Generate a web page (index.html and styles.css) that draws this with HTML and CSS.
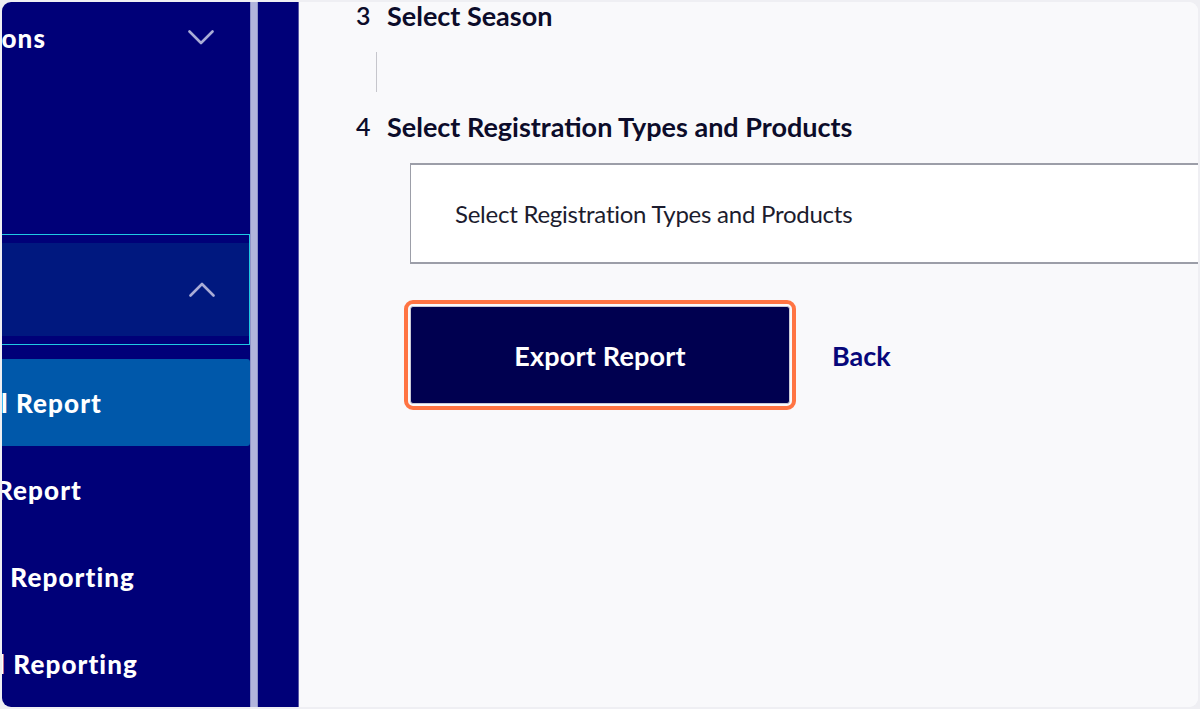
FILE: index.html
```html
<!DOCTYPE html>
<html lang="en">
<head>
<meta charset="utf-8">
<title>Export Report</title>
<link rel="stylesheet" href="styles.css">
</head>
<body>
<div class="frame">
  <aside class="sidebar">
    <div class="nav-row nav-top">
      <span class="label end-44">Registrations</span>
      <svg class="chev" width="26" height="15" viewBox="0 0 26 15"><polyline points="1.5,1.5 13,13 24.5,1.5" fill="none" stroke="#a9acd6" stroke-width="2.6" stroke-linecap="round" stroke-linejoin="round"/></svg>
    </div>
    <div class="nav-spacer"></div>
    <div class="nav-group">
      <div class="nav-group-inner">
        <span class="label end-0">Reports</span>
        <svg class="chev" width="26" height="15" viewBox="0 0 26 15"><polyline points="1.5,13.5 13,2 24.5,13.5" fill="none" stroke="#a9acd6" stroke-width="2.6" stroke-linecap="round" stroke-linejoin="round"/></svg>
      </div>
    </div>
    <div class="nav-item active"><span class="label end-100">Individual Report</span></div>
    <div class="nav-item"><span class="label end-80">Member Report</span></div>
    <div class="nav-item"><span class="label end-131">Regional Reporting</span></div>
    <div class="nav-item"><span class="label end-136">Financial Reporting</span></div>
  </aside>
  <div class="scrollbar"></div>
  <div class="gutter"></div>
  <main class="main">
    <div class="step step-3">
      <span class="step-num">3</span>
      <span class="step-title">Select Season</span>
    </div>
    <div class="step-line"></div>
    <div class="step step-4">
      <span class="step-num">4</span>
      <span class="step-title">Select Registration Types and Products</span>
    </div>
    <div class="select-box">Select Registration Types and Products</div>
    <div class="actions">
      <button class="btn-export">Export Report</button>
      <a class="btn-back">Back</a>
    </div>
  </main>
</div>
</body>
</html>
```
FILE: styles.css
```css
html, body {
  margin: 0;
  padding: 0;
}
body {
  background: #efeff3;
  width: 1200px;
  height: 709px;
  overflow: hidden;
  font-family: Lato, "Liberation Sans", sans-serif;
}
.frame {
  margin: 2px;
  width: 1196px;
  height: 705px;
  border-radius: 9px;
  overflow: hidden;
  display: flex;
  background: #f9f9fb;
}
.sidebar {
  width: 248px;
  flex-shrink: 0;
  background: #000078;
  overflow: hidden;
  display: flex;
  flex-direction: column;
}
.label {
  display: flex;
  justify-content: flex-end;
  white-space: nowrap;
  color: #ffffff;
  font-weight: 900;
  font-size: 26px;
  letter-spacing: 1.1px;
  flex-shrink: 0;
}
.end-44 { width: 44px; }
.end-0 { width: 0; visibility: hidden; }
.end-100 { width: 100px; }
.end-80 { width: 80px; }
.end-131 { width: 133px; }
.end-136 { width: 136px; }
.nav-row {
  height: 72px;
  display: flex;
  align-items: center;
  justify-content: space-between;
  padding-right: 36px;
}
.nav-spacer {
  height: 161px;
}
.nav-group {
  height: 111px;
  box-sizing: border-box;
  border: 1.5px solid #1fc9e3;
  border-left: none;
  padding: 8px 0;
}
.nav-group-inner {
  height: 100%;
  background: #00187f;
  display: flex;
  align-items: center;
  justify-content: space-between;
  padding-right: 34px;
}
.nav-group + .nav-item {
  margin-top: 14px;
}
.nav-item {
  height: 87px;
  display: flex;
  align-items: center;
  flex-shrink: 0;
}
.nav-item.active {
  background: #0058aa;
  border-radius: 0 3px 3px 0;
}
.scrollbar {
  width: 6px;
  flex-shrink: 0;
  background: #b1b4dc;
  border-left: 1px solid #8f93c8;
  border-right: 1px solid #8f93c8;
}
.gutter {
  width: 40px;
  flex-shrink: 0;
  background: #000078;
  border-right: 1px solid #5a5aa6;
}
.main {
  flex: 1;
  background: #f9f9fb;
  padding-left: 57px;
  overflow: hidden;
  min-width: 0;
}
.step {
  height: 30px;
  display: flex;
  align-items: center;
  color: #0c0c2a;
  font-size: 27px;
  font-weight: 700;
}
.step-3 {
  margin-top: -2px;
}
.step-num {
  width: 31px;
  font-size: 25px;
  font-weight: 600;
}
.step-line {
  width: 1px;
  height: 40px;
  background: #c6c6cc;
  margin: 22px 0 0 20px;
}
.step-4 {
  margin-top: 19px;
}
.select-box {
  margin: 22px 0 0 54px;
  width: 820px;
  height: 101px;
  box-sizing: border-box;
  background: #ffffff;
  border: 1px solid #9c9ea8;
  border-top-width: 2px;
  border-bottom-width: 2px;
  display: flex;
  align-items: center;
  padding-left: 44px;
  color: #1c1c2e;
  font-size: 24px;
  letter-spacing: -0.25px;
}
.actions {
  margin: 42px 0 0 54px;
  display: flex;
  align-items: center;
  gap: 42px;
}
.btn-export {
  width: 380px;
  height: 98px;
  background: #000050;
  color: #ffffff;
  border: 1px solid #c9c9d6;
  border-radius: 3px;
  font-family: Lato, "Liberation Sans", sans-serif;
  font-weight: 700;
  font-size: 27px;
  letter-spacing: 0.2px;
  outline: 4px solid #ff7443;
  outline-offset: 2px;
}
.btn-back {
  color: #07077a;
  font-weight: 700;
  font-size: 27px;
}
```
